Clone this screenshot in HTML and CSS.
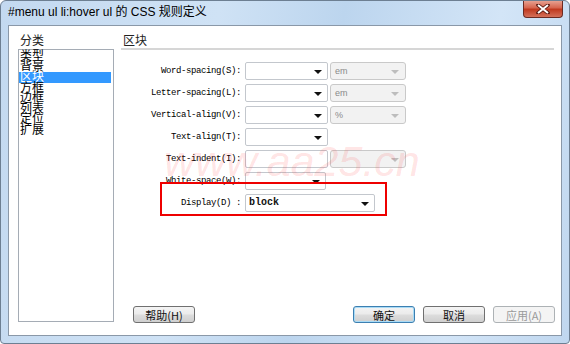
FILE: index.html
```html
<!DOCTYPE html>
<html lang="zh-CN">
<head>
  <meta charset="UTF-8">
  <title>CSS 规则定义</title>
  <link rel="stylesheet" href="styles.css">
</head>
<body>
  <div class="window">
    <div class="titlebar">
      <span class="title">#menu ul li:hover ul 的 CSS 规则定义</span>
      <button class="close-button">
        <svg width="14" height="10" viewBox="0 0 14 10">
          <path d="M2 1 L12 9 M12 1 L2 9" stroke="#5a1a12" stroke-width="3.6" stroke-linecap="round"/>
          <path d="M2 1 L12 9 M12 1 L2 9" stroke="#fff" stroke-width="2"/>
        </svg>
      </button>
    </div>
    <div class="client">
      <div class="sidebar">
        <div class="caption">分类</div>
        <ul class="category-list">
          <li>类型</li>
          <li>背景</li>
          <li class="selected">区块</li>
          <li>方框</li>
          <li>边框</li>
          <li>列表</li>
          <li>定位</li>
          <li>扩展</li>
        </ul>
      </div>
      <div class="main">
        <div class="section-title">区块</div>
        <div class="form">
          <div class="row">
            <label>Word-spacing(S):</label>
            <div class="combo w83"><span class="arrow"></span></div>
            <div class="unit">em<span class="arrow"></span></div>
          </div>
          <div class="row">
            <label>Letter-spacing(L):</label>
            <div class="combo w83"><span class="arrow"></span></div>
            <div class="unit">em<span class="arrow"></span></div>
          </div>
          <div class="row">
            <label>Vertical-align(V):</label>
            <div class="combo w83"><span class="arrow"></span></div>
            <div class="unit">%<span class="arrow"></span></div>
          </div>
          <div class="row">
            <label>Text-align(T):</label>
            <div class="combo w83"><span class="arrow"></span></div>
          </div>
          <div class="row">
            <label>Text-indent(I):</label>
            <div class="combo w83"></div>
            <div class="unit"><span class="arrow"></span></div>
          </div>
          <div class="row">
            <label>White-space(W):</label>
            <div class="combo w81"><span class="arrow"></span></div>
          </div>
          <div class="row">
            <label>Display(D) :</label>
            <div class="combo w130"><span class="value">block</span><span class="arrow"></span></div>
          </div>
          <div class="watermark">www.aa25.cn</div>
          <div class="callout"></div>
        </div>
        <div class="buttons">
          <button class="btn">帮助(H)</button>
          <div class="button-group">
            <button class="btn default">确定</button>
            <button class="btn">取消</button>
            <button class="btn" disabled>应用(A)</button>
          </div>
        </div>
      </div>
    </div>
  </div>
</body>
</html>
```

FILE: styles.css
```css
body {
  margin: 0;
  font-family: "Liberation Sans", "Noto Sans CJK SC", sans-serif;
}
.window {
  width: 570px;
  height: 344px;
  box-sizing: border-box;
  border: 1px solid #6d7f92;
  border-radius: 6px 6px 4px 4px;
  background: linear-gradient(100deg, #c3d9f0 0%, #cfe2f5 35%, #bcd5ee 55%, #d3e5f7 80%, #c0d7ef 100%);
  display: flex;
  flex-direction: column;
  overflow: hidden;
}
.titlebar {
  height: 24px;
  display: flex;
  align-items: flex-start;
}
.title {
  margin: 4px 0 0 7px;
  font-size: 12px;
  line-height: 15px;
  color: #000;
}
.close-button {
  margin: -1px 6px 0 auto;
  width: 40px;
  height: 18px;
  border: 1px solid #6b2a22;
  border-top: none;
  border-radius: 0 0 4px 4px;
  background: linear-gradient(180deg, #e9a99a 0%, #d7664f 45%, #c0391f 55%, #d4705a 100%);
  padding: 0;
  display: flex;
  align-items: center;
  justify-content: center;
}
.client {
  margin: 0 7px 0 7px;
  height: 311px;
  box-sizing: border-box;
  border: 1px solid #8a98a8;
  background: #fff;
  display: flex;
}
.sidebar {
  padding-left: 9px;
}
.caption {
  padding: 8px 0 0 2px;
  height: 15px;
  font-size: 12px;
  line-height: 14px;
  color: #222;
}
.category-list {
  list-style: none;
  margin: 0;
  padding: 1px 2px 0 0;
  width: 96px;
  height: 273px;
  box-sizing: border-box;
  border: 1px solid #a5acb5;
  font-size: 12px;
  line-height: 10.5px;
  color: #000;
}
.category-list li {
  height: 10.5px;
  padding-left: 1px;
}
.category-list .selected {
  background: #3399ff;
  color: #fff;
}
.main {
  margin-left: 7px;
  width: 434px;
  display: flex;
  flex-direction: column;
  padding-bottom: 12px;
}
.section-title {
  padding: 8px 0 0 2px;
  height: 14px;
  font-size: 12px;
  line-height: 14px;
  color: #222;
  border-bottom: 2px solid #d6d6d6;
  width: 431px;
}
.form {
  position: relative;
  margin-top: 12px;
}
.row {
  display: flex;
  height: 22px;
  align-items: flex-start;
}
.row label {
  width: 120px;
  margin-right: 4px;
  text-align: right;
  font-family: "Liberation Mono", monospace;
  font-size: 9px;
  letter-spacing: -0.4px;
  line-height: 18px;
  color: #000;
  white-space: nowrap;
}
.combo {
  position: relative;
  height: 18px;
  box-sizing: border-box;
  border: 1px solid #c3c7cd;
  border-radius: 2px;
  background: #fff;
}
.w83 { width: 83px; }
.w81 { width: 81px; }
.w130 { width: 130px; }
.arrow {
  position: absolute;
  right: 5px;
  top: 7px;
  border-left: 4px solid transparent;
  border-right: 4px solid transparent;
  border-top: 4px solid #111;
}
.value {
  display: block;
  padding-left: 3px;
  font-family: "Liberation Mono", monospace;
  font-size: 10px;
  font-weight: bold;
  line-height: 16px;
  color: #111;
}
.unit {
  position: relative;
  margin-left: 2px;
  width: 76px;
  height: 18px;
  box-sizing: border-box;
  border: 1px solid #c9c9c9;
  border-radius: 3px;
  background: #f2f2f2;
  padding-left: 4px;
  font-size: 9px;
  line-height: 16px;
  color: #8a8a8a;
}
.unit .arrow {
  border-top-color: #bdbdbd;
  right: 6px;
}
.watermark {
  position: absolute;
  left: 43px;
  top: 78px;
  font-size: 43px;
  line-height: 42px;
  font-style: italic;
  color: rgba(255, 60, 60, 0.15);
  pointer-events: none;
}
.callout {
  position: absolute;
  left: 39px;
  top: 120px;
  width: 227px;
  height: 34px;
  box-sizing: border-box;
  border: 2px solid #ee0000;
}
.buttons {
  margin-top: auto;
  display: flex;
  align-items: center;
  padding-left: 12px;
}
.button-group {
  margin-left: auto;
  display: flex;
  gap: 8px;
}
.btn {
  width: 62px;
  height: 17px;
  box-sizing: border-box;
  padding: 0;
  border: 1px solid #707070;
  border-radius: 3px;
  background: linear-gradient(180deg, #f4f4f4 0%, #ebebeb 48%, #dddddd 52%, #cfcfcf 100%);
  font-family: "Noto Sans CJK SC", sans-serif;
  font-size: 11px;
  line-height: 14px;
  color: #111;
}
.btn.default {
  border-color: #3c7fb1;
  box-shadow: inset 0 0 0 1px #a9dbf6;
}
.btn:disabled {
  border-color: #adb2b5;
  background: #f4f4f4;
  color: #9a9a9a;
}
```
